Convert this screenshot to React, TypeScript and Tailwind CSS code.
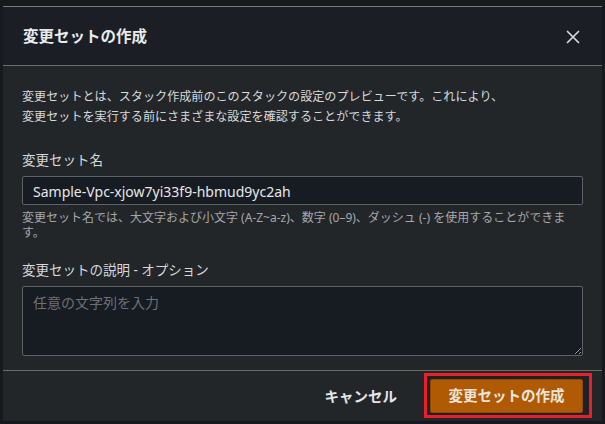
import React from "react";

const FONT = { fontFamily: "'Noto Sans', 'Noto Sans CJK JP', sans-serif" };

export default function App() {
  return (
    <div
      className="w-[605px] h-[424px] bg-[#16191e] pt-[6px] pl-[3px] pr-[3px] pb-[3px] overflow-hidden"
      style={FONT}
    >
      <div className="w-[599px] h-[415px] flex flex-col border-t border-[#7f7b6f] bg-[#232629]">
        {/* Header */}
        <div className="h-[59px] shrink-0 flex items-center justify-between pl-[20px] pr-[22px] bg-[#1b1e24] border-b border-[#6e6c66]">
          <h1 className="text-[15.5px] font-bold text-[#e9eaec] leading-none pt-[1px]">
            変更セットの作成
          </h1>
          <svg width="14" height="14" viewBox="0 0 14 14" className="mt-[1px]">
            <path d="M1.5 1.5 L12.5 12.5 M12.5 1.5 L1.5 12.5" stroke="#d6d9dc" strokeWidth="1.7" strokeLinecap="round" />
          </svg>
        </div>

        {/* Body */}
        <div className="flex-1 flex flex-col pl-[19px] pr-[19px] pt-[21px] bg-[#232629] border-b border-[#6e6c66]">
          <p className="text-[12.1px] leading-[20px] text-[#d6d9dc]">
            変更セットとは、スタック作成前のこのスタックの設定のプレビューです。これにより、
            <br />
            変更セットを実行する前にさまざまな設定を確認することができます。
          </p>

          <label className="mt-[24px] text-[13.5px] leading-[18px] text-[#d6d9dc]">変更セット名</label>
          <input
            readOnly
            value="Sample-Vpc-xjow7yi33f9-hbmud9yc2ah"
            className="mt-[7px] h-[29px] w-full bg-[#171b22] border border-[#5e6266] rounded-[2px] px-[10px] pt-[1px] text-[14px] text-[#e6e8ea] outline-none"
            style={FONT}
          />
          <div className="mt-[5px] flex flex-col text-[12px] text-[#a3a8ad]">
            <span className="h-[15px] leading-[15px] whitespace-nowrap">
              変更セット名では、大文字および小文字 (A-Z~a-z)、数字 (0–9)、ダッシュ (-) を使用することができま
            </span>
            <span className="h-[15px] leading-[15px]">す。</span>
          </div>

          <label className="mt-[21px] text-[13.5px] leading-[18px] text-[#d6d9dc]">
            変更セットの説明 - オプション
          </label>
          <textarea
            placeholder="任意の文字列を入力"
            className="mt-[7px] h-[70px] w-full bg-[#171b22] border border-[#5e6266] rounded-[2px] px-[10px] py-[6px] text-[14px] leading-[20px] text-[#e4e6e8] placeholder:text-[#6c7176] outline-none"
            style={FONT}
          />
        </div>

        {/* Footer */}
        <div className="h-[50px] shrink-0 flex items-start justify-end pt-[2px] pr-[10px] bg-[#232629]">
          <span className="mt-[14px] mr-[27px] text-[14.5px] font-bold leading-[18px] text-[#e3e5e8]">
            キャンセル
          </span>
          <div className="border-[3px] border-[#e8202b] pl-[3px] pr-[6px] pt-[3px] pb-[2px] bg-[#1e2125]">
            <button
              className="h-[34px] w-[153px] flex items-center justify-center bg-[#b05a03] border border-[#8f4903] rounded-[2px] text-[14.5px] font-bold text-[#ece4da]"
              style={FONT}
            >
              変更セットの作成
            </button>
          </div>
        </div>
      </div>
    </div>
  );
}
